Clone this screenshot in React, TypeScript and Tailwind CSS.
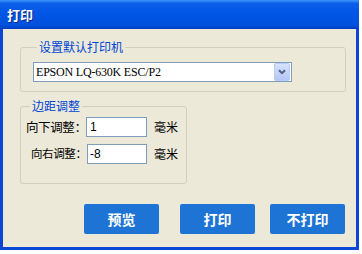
import { useState } from "react";

const cjk = "font-['Noto_Sans_CJK_SC','Noto_Sans',sans-serif]";

export default function App() {
  const [down, setDown] = useState("1");
  const [right, setRight] = useState("-8");

  return (
    <div className="h-[254px] w-[362px] bg-white">
      <div className={`flex h-[250px] w-[359px] flex-col ${cjk}`}>
        {/* Title bar */}
        <div className="flex h-[29px] flex-none items-center bg-[linear-gradient(to_bottom,#3d95ff_0%,#0a5eea_12%,#0055e5_50%,#0050dc_88%,#003cbf_100%)] pl-[7px]">
          <span className="text-[13px] leading-none font-bold text-white [text-shadow:1px_1px_0_#0a2a8a]">打印</span>
        </div>

        {/* Body */}
        <div className="flex flex-1 flex-col border-x-[3px] border-b-[3px] border-[#0b46d4] bg-[#ece9d8] pt-[11px] pl-[17px]">
          {/* Default printer */}
          <fieldset className="w-[326px] flex-none rounded-[3px] border border-[#d0d0bf] pt-[8px] pb-[9px] pl-[12px]">
            <legend className="ml-[4px] px-[2px] text-[12px] leading-[14px] text-[#0046d5]">设置默认打印机</legend>
            <div className="flex h-[20px] w-[259px] items-center border border-[#7f9db9] bg-white">
              <span className="flex-1 pl-[2px] font-['Liberation_Serif',serif] text-[12px] leading-none tracking-[-0.2px] text-black">
                EPSON LQ-630K ESC/P2
              </span>
              <span className="mr-px flex h-[18px] w-[16px] items-center justify-center rounded-[2px] border border-[#b9caf3] bg-[linear-gradient(to_bottom,#d6e2fc,#b4c8f6)]">
                <svg width="8" height="6" viewBox="0 0 8 6">
                  <path d="M1 1.2 L4 4.2 L7 1.2" fill="none" stroke="#4d6185" strokeWidth="2" />
                </svg>
              </span>
            </div>
          </fieldset>

          {/* Margins */}
          <fieldset className="mt-[7px] w-[167px] flex-none rounded-[3px] border border-[#d0d0bf] pt-[4px] pb-[19px] pl-[5px]">
            <legend className="ml-[4px] px-[2px] text-[12px] leading-[14px] text-[#0046d5]">边距调整</legend>
            <div className="flex h-[20px] items-center">
              <span className="w-[60px] flex-none text-[12.5px] leading-none tracking-[-0.4px] whitespace-nowrap text-black">向下调整：</span>
              <input
                value={down}
                onChange={(e) => setDown(e.target.value)}
                className="h-[20px] w-[61px] flex-none border border-[#7f9db9] bg-white pl-[3px] font-['Liberation_Sans',sans-serif] text-[12px] text-black outline-none"
              />
              <span className="ml-[7px] text-[12px] leading-none whitespace-nowrap text-black">毫米</span>
            </div>
            <div className="mt-[7px] flex h-[20px] items-center">
              <span className="w-[61px] flex-none pl-[5px] text-[11.5px] leading-none tracking-[-0.4px] whitespace-nowrap text-black">向右调整：</span>
              <input
                value={right}
                onChange={(e) => setRight(e.target.value)}
                className="h-[20px] w-[60px] flex-none border border-[#7f9db9] bg-white pl-[2px] font-['Liberation_Sans',sans-serif] text-[12px] text-black outline-none"
              />
              <span className="ml-[7px] text-[12px] leading-none whitespace-nowrap text-black">毫米</span>
            </div>
          </fieldset>

          {/* Buttons */}
          <div className="mt-[20px] flex">
            <button className="ml-[64px] h-[30px] w-[75px] rounded-[2px] bg-[#1d74d4] text-[14px] font-bold text-white">预览</button>
            <button className="ml-[21px] h-[30px] w-[75px] rounded-[2px] bg-[#1d74d4] text-[14px] font-bold text-white">打印</button>
            <button className="ml-[15px] h-[30px] w-[75px] rounded-[2px] bg-[#1d74d4] text-[14px] font-bold text-white">不打印</button>
          </div>
        </div>
      </div>
    </div>
  );
}
